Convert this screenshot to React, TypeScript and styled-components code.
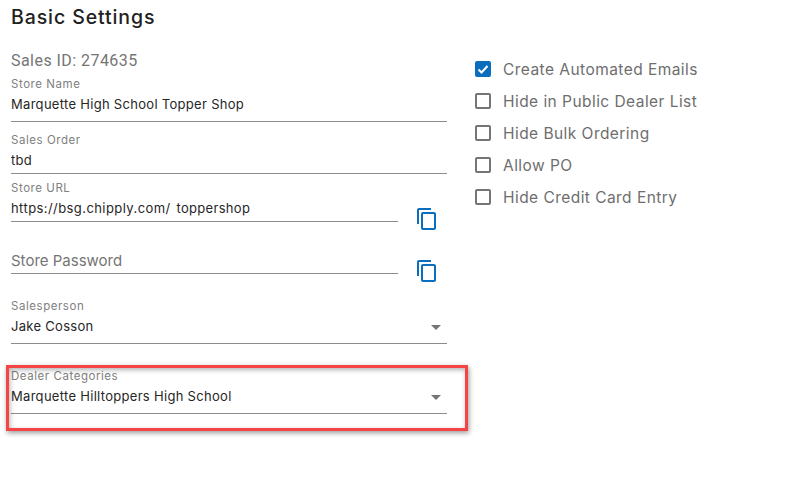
import { ReactNode } from 'react';
import styled, { createGlobalStyle } from 'styled-components';

const GlobalStyle = createGlobalStyle`
  body {
    margin: 0;
    background: #fff;
    font-family: Inter, "Liberation Sans", sans-serif;
  }
`;

const Page = styled.div`
  width: 785px;
  height: 480px;
  overflow: hidden;
  padding: 5px 0 0 11px;
  box-sizing: border-box;
`;

const Title = styled.h2`
  margin: 0;
  height: 24px;
  font-size: 19.5px;
  line-height: 24px;
  font-weight: 500;
  letter-spacing: 0.9px;
  color: #212121;
`;

const Columns = styled.div`
  display: flex;
  margin-top: 22px;
`;

const LeftColumn = styled.div`
  width: 436px;
  display: flex;
  flex-direction: column;
`;

const RightColumn = styled.div`
  margin-left: 28px;
  padding-top: 7px;
  display: flex;
  flex-direction: column;
  gap: 10px;
`;

const SalesId = styled.div`
  font-family: Roboto, sans-serif;
  font-size: 16px;
  line-height: 20px;
  letter-spacing: 0.45px;
  color: #757575;
`;

const Field = styled.div<{ $height: number; $gap?: number; $width?: number }>`
  position: relative;
  box-sizing: border-box;
  height: ${(p) => p.$height}px;
  width: ${(p) => p.$width ?? 436}px;
  margin-top: ${(p) => p.$gap ?? 0}px;
  border-bottom: 1px solid #8c8c8c;
  flex-shrink: 0;
`;

const Label = styled.div`
  font-size: 11.5px;
  line-height: 14px;
  letter-spacing: 0.55px;
  color: #808080;
`;

const Value = styled.div`
  margin-top: 3px;
  font-size: 13px;
  line-height: 20px;
  letter-spacing: 0.3px;
  color: #262626;
`;

const UrlPrefix = styled.span`
  margin-right: 2px;
  letter-spacing: 0.42px;
`;

const Placeholder = styled.div`
  font-size: 15px;
  line-height: 20px;
  padding-top: 3px;
  color: #757575;
`;

const UrlRow = styled.div<{ $gap: number }>`
  display: flex;
  align-items: flex-end;
  margin-top: ${(p) => p.$gap}px;
`;

const CopyIcon = styled.svg`
  width: 24px;
  height: 24px;
  margin: 0 0 -9px 17px;
  fill: #0a6ebd;
  flex-shrink: 0;
`;

const Caret = styled.span`
  position: absolute;
  right: 6px;
  top: 26px;
  width: 0;
  height: 0;
  border-left: 5.5px solid transparent;
  border-right: 5.5px solid transparent;
  border-top: 5px solid #757575;
`;

const Highlight = styled.div`
  position: absolute;
  left: -5px;
  top: -4px;
  width: 462px;
  height: 66px;
  box-sizing: border-box;
  border: 3px solid #f44444;
  box-shadow:
    1px 2px 5px rgba(0, 0, 0, 0.4),
    inset 1px 2px 5px rgba(0, 0, 0, 0.3);
  pointer-events: none;
`;

const CheckRow = styled.div`
  display: flex;
  align-items: center;
  height: 22px;
  gap: 12px;
`;

const Box = styled.span<{ $checked?: boolean }>`
  box-sizing: border-box;
  width: 16px;
  height: 16px;
  border-radius: 2px;
  border: 2px solid ${(p) => (p.$checked ? '#0a6ebd' : '#757575')};
  background: ${(p) => (p.$checked ? '#0a6ebd' : '#fff')};
  display: flex;
  align-items: center;
  justify-content: center;
`;

const CheckText = styled.span`
  font-size: 15.5px;
  letter-spacing: 0.45px;
  color: #6e6e6e;
`;

const Copy = () => (
  <CopyIcon viewBox="0 0 24 24">
    <path d="M16 1H4c-1.1 0-2 .9-2 2v14h2V3h12V1zm3 4H8c-1.1 0-2 .9-2 2v14c0 1.1.9 2 2 2h11c1.1 0 2-.9 2-2V7c0-1.1-.9-2-2-2zm0 16H8V7h11v14z" />
  </CopyIcon>
);

const Check = ({ label, checked }: { label: ReactNode; checked?: boolean }) => (
  <CheckRow>
    <Box $checked={checked}>
      {checked && (
        <svg width="12" height="12" viewBox="0 0 24 24" fill="none" stroke="#fff" strokeWidth="4">
          <path d="M3 13l6 6L21 6" />
        </svg>
      )}
    </Box>
    <CheckText>{label}</CheckText>
  </CheckRow>
);

export default function App() {
  return (
    <Page>
      <GlobalStyle />
      <Title>Basic Settings</Title>
      <Columns>
        <LeftColumn>
          <SalesId>Sales ID: 274635</SalesId>
          <Field $height={45} $gap={6}>
            <Label>Store Name</Label>
            <Value>Marquette High School Topper Shop</Value>
          </Field>
          <Field $height={41} $gap={11}>
            <Label>Sales Order</Label>
            <Value>tbd</Value>
          </Field>
          <UrlRow $gap={7}>
            <Field $height={41} $width={387}>
              <Label>Store URL</Label>
              <Value>
                <UrlPrefix>https://bsg.chipply.com/</UrlPrefix> toppershop
              </Value>
            </Field>
            <Copy />
          </UrlRow>
          <UrlRow $gap={26}>
            <Field $height={26} $width={387}>
              <Placeholder>Store Password</Placeholder>
            </Field>
            <Copy />
          </UrlRow>
          <Field $height={45} $gap={25}>
            <Label>Salesperson</Label>
            <Value>Jake Cosson</Value>
            <Caret />
          </Field>
          <Field $height={45} $gap={25}>
            <Label>Dealer Categories</Label>
            <Value>Marquette Hilltoppers High School</Value>
            <Caret />
            <Highlight />
          </Field>
        </LeftColumn>
        <RightColumn>
          <Check label="Create Automated Emails" checked />
          <Check label="Hide in Public Dealer List" />
          <Check label="Hide Bulk Ordering" />
          <Check label="Allow PO" />
          <Check label="Hide Credit Card Entry" />
        </RightColumn>
      </Columns>
    </Page>
  );
}
